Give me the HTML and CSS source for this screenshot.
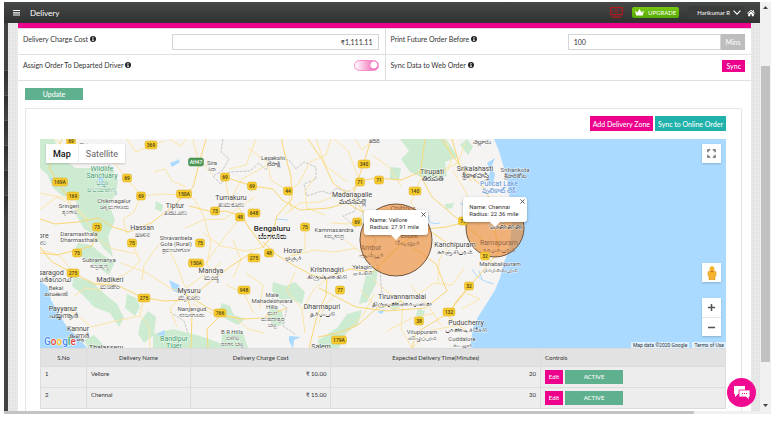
FILE: index.html
```html
<!DOCTYPE html>
<html lang="en">
<head>
<meta charset="utf-8">
<title>Delivery</title>
<link rel="stylesheet" href="styles.css">
</head>
<body>
<svg class="defs" aria-hidden="true">
  <symbol id="info" viewBox="0 0 12 12"><circle cx="6" cy="6" r="6" fill="#222"/><path d="M5 2h2v2H5zM4 5h3v4h1v1H4V9h1V6H4z" fill="#fff"/></symbol>
</svg>
<div class="window">
  <div class="app">
    <header class="topbar">
      <button class="menu" aria-label="Menu"><svg viewBox="0 0 7 6"><path d="M0 .5h7M0 2.8h7M0 5h7" stroke="#fff" stroke-width="1.2"/></svg></button>
      <h1>Delivery</h1>
      <svg class="cash" viewBox="0 0 13 11"><path d="M.7.7h11.6v7H.7zM2 10.2h9" fill="none" stroke="#b8191c" stroke-width="1.2"/><circle cx="6.500" cy="4.200" r="1.500" fill="none" stroke="#b8191c" stroke-width=".8"/><path d="M2.500 4.200h1M9.500 4.200h1" stroke="#b8191c"/></svg>
      <a class="upgrade" href="#"><svg viewBox="0 0 9 7"><path d="M0 1.500L2.300 3.500 4.500 0 6.700 3.500 9 1.500 7.800 6.500H1.200z" fill="#fff"/></svg>UPGRADE</a>
      <button class="user">Harikumar R <svg viewBox="0 0 8 5"><path d="M.6.6L4 4.200 7.400.6" fill="none" stroke="#fff" stroke-width="1.100"/></svg></button>
      <a class="home" href="#" aria-label="Home"><svg viewBox="0 0 9 8"><path d="M4.500.3L0 4.300l.6.6L4.500 1.600l3.900 3.300.6-.6L7.700 3V.8H6.500V2zM1.300 5v2.700h2.300V5.400h1.800v2.300h2.300V5L4.500 2.300z" fill="#fff"/></svg></a>
    </header>
    <div class="body">
      <nav class="rail" aria-label="Sections"><span></span><span></span><span></span><span></span><span></span><span></span></nav>
      <main>
        <form class="settings">
          <div class="field">
            <label for="cost">Delivery Charge Cost <svg class="info"><use href="#info"/></svg></label>
            <input id="cost" class="money" type="text" value="₹1,111.11">
          </div>
          <div class="field">
            <label for="before">Print Future Order Before <svg class="info"><use href="#info"/></svg></label>
            <div class="group"><input id="before" type="text" value="100"><span>Mins</span></div>
          </div>
          <div class="field">
            <label for="assign">Assign Order To Departed Driver <svg class="info"><use href="#info"/></svg></label>
            <input id="assign" class="switch" type="checkbox" checked>
          </div>
          <div class="field">
            <label for="sync">Sync Data to Web Order <svg class="info"><use href="#info"/></svg></label>
            <button id="sync" type="button" class="btn pink">Sync</button>
          </div>
        </form>
        <button class="btn green update">Update</button>
        <section class="panel">
          <div class="actions">
            <button class="btn pink">Add Delivery Zone</button>
            <button class="btn teal">Sync to Online Order</button>
          </div>
          <div class="map">
            <svg class="canvas" viewBox="40 139 686 209" preserveAspectRatio="xMidYMid slice" role="img" aria-label="Delivery zones">
              <path class="land" d="M40 139H726V348H40z"/>
              <g class="forest">
                <path d="M40 139h14l7 17 14 12 15 0 22 0 6 13-2 12-7 12 6 15-7 17 5 20-10-9-8-13-11-6-9-16 2-16-14-1-10-8-6-14-7-6z"/>
                <path d="M78 243l13 2 12 10 12 7-6 13-13-9-11-8-12-4z"/>
                <path d="M74 276l18 6 15 14 10 8 7 14-5 9-9-14-16-6-11-12-11-9z"/>
                <path d="M127 294l9 4 4 9-5 9-10-8z"/>
                <path d="M141 321l7-10 8 6-2 18-10 8-6-9z"/>
                <path d="M84 340l10-5 12 13H88zM153 334l20-5 27 7 20 7 8 5h-75z"/>
                <path d="M273 282l13 4 9-4 10 10-3 12-12-5-9 1-9-9zM270 304l12 8 3 11-9 4-8-8z"/>
                <path d="M222 303l8 3 4 9 11 4-7 6-12-6-8-6zM222 334l20-4 6 18h-27z"/>
                <path d="M318 340l19-12 10-14 15-4-4 15-11 7-8 16h-20z"/>
                <path d="M362 292l4-17 12-8-2 17-9 18-8 2z"/>
                <path d="M400 139h46l12 18-13 5 2 14-18 4-19-8-9-13 8-8z"/>
                <path d="M390 167l11 1-2 12-9-1zM467 139l6 8-5 8-8-10zM156 201l7 4-1 7-7-3z"/>
                <path d="M418 308l7 3-2 7-7-2zM393 302l8 4-6 5-5-3zM445 204l9-1-2 5-6 1z"/>
              </g>
              <g class="water">
                <path d="M40 281l8 6 3 13 8 14 8 13 11 10 9 11H40z"/>
                <path d="M494 139l5 12 5 17 3 9 1 9 2 16 2 22-3 27-5 11-4 16-5 12-8 13-9 14-5 11-3 20H726V139z"/>
                <path d="M495 158l-4 10 4 6-2 12-5-4 2-12-3-7zM170 163l8-3-1-3 3 5-8 5zM169 280l10 5 1 8-7-2zM157 334l8-4-1 7zM289 336l12 1-7 3-1 9-4-8zM377 312l8-3-3 5zM98 178l4-2 3 12-5-3zM50 178l8 1-5 4z"/>
                <path class="creek" d="M472 269q6 12 22 15M479 271l3 8M460 203q13 11 27 3M440 223q-12 3-12-8M276 219l12 1"/>
              </g>
              <path class="border" d="M223 139l-2 13 8 7-7 12-9 5 8 8 8-12 21-1 9-8 7 7 5-12 18 2 7 9 8-7 12 5 0 12-12 5 3 12 15-5 8 3 6-6 21 6-2 17-12 5 12 11 12-5 9 19-5 12 9 18 2 24M170 312l14 9 4 12M272 298l15 10-4 18 12 8"/>
              <g class="minor">
                <path d="M40 209l17-12 12 6 16 15 11 20 17 11 25 5M54 139l19 14 17 6 23 2 14 18 14 16-7 17-11 7 4 15M127 139l9 13 15-7 14-4M141 196l20-2 22 1 11 4 9 15 8 28-4 22 9 16M154 172l11-3 7 12 14 6M193 139l4 17 16 19M185 228l18-8 22-1 17-14 13-8M202 268l13-18 13-17 12-15M186 288l18-13 17-12M182 295l-12 14 7 18M193 304l20 10 22 3 13 12 16 4M144 298l-4 17 9 12 1 21M59 307l17 7 15 13 24-6 25-5M74 296l11-8 15 2 12-9M132 243l8 18-11 11-19 10-15 2M40 250l19 5 14 17M159 244l-15 21-2 15M168 248l10 20 7 19M248 148l20 15 3 17 17 11 4 20M229 169l17-4 10-26M331 139l-5 16-16 7-11 21-9 8M285 214l15-11 20-1 19-8 12-4M316 139l9 26 22 17M334 139l14 12 12 31M305 227l0 22-19 9M292 256l22-6 20 2 23-4M327 279l-13 10-12 21 3 23M340 290l-16 16-5 17M361 290l13 15 26 4M374 294l-10 20-22 24M403 302l-2 27 11 19M403 302l-18-12-12-11M416 296l18-13 18 2 12-17M452 240l-13 20-1 22M466 293l14 6-18 10M418 170l20 2 20-9 7-20M420 180l-9 23 12 16M453 171l12 20 9 18M445 139l7 18-4 13-15 7M410 285l19 22 12 18M387 331l25-13 23-5M412 348l20-18 28-5M40 193l25 5 23 21M68 154l23 6 15-14M169 139l12 7 5-7M121 263l24 9 27 17 12 2M225 177l3 18 13 16 8 18M203 233l18 13 25 5 19-4M230 200l12-21 27-15M226 285l18 8 10 21M246 273l17 12-3 24M295 272l-8 19 15 18M233 240l8 20-8 18M355 139l7 11 12-11M372 155l17 12 12 19M315 177l-10 14 2 17 18 7M331 223l18 1 14-9M345 240l15 12 15-12"/>
              </g>
              <g class="major">
                <path d="M40 219l15 5 23-2 20-4 15 9 16 5 22-9 19-14 23-22 6-23 7-25M62 139l-13 29 18 28M189 206l24 6 13-1 15 5 14 20 8 11 9-11 5-20 15-17-1-22-8-30-2-12M225 177l27 9 21 3 9 11 18 10 29-2 18-5 26 15 28 4 27 8 18 12M40 253l17 2 16-4 19-5 8-18M40 247l12 15 21 11 22 11 22 1 24 12 23 4 26-1 15-14 26-20 22-14M185 291l7 22-1 35M187 295l18 11 18 10 20 3 20-1 24-10M308 139l15 22 10 22 20 15 20 26M352 190l8-9 16-3 25 2 19-8M363 165l8-25M363 165l-9 27M263 242l14 13 18 11 17 9 15 3-1 17-9 21-8 32M327 278l22-9 24 3 29-29 24-14 20-2 28-7 19-15M414 248l22 16 11 27-22 17-38 3-31-4-37-19M425 139l-5 36 12 22 28 24 22 18M452 139l8 28 23 20 12 21M494 219l4 34-29 34-21 26-32 20-4 15M469 286l-13 16-8 14 19 16M441 139l30 42M318 337l20-4 20-8 19-17 25-7M220 316l-13 13 1 19"/>
              </g>
              <circle class="zone" cx="396" cy="240" r="36"/>
              <circle class="zone" cx="495" cy="228" r="29"/>
              <g id="labels"></g>
              <g id="shields"></g>
              <text class="google" x="44" y="345"><tspan fill="#4285f4">G</tspan><tspan fill="#ea4335">o</tspan><tspan fill="#fbbc05">o</tspan><tspan fill="#4285f4">g</tspan><tspan fill="#34a853">l</tspan><tspan fill="#ea4335">e</tspan></text>
            </svg>
            <div class="maptype"><button class="on">Map</button><button>Satellite</button></div>
            <button class="ctl full" aria-label="Full screen"><svg viewBox="0 0 10 10"><path d="M1 3.500V1h2.500M6.500 1H9v2.500M9 6.500V9H6.500M3.500 9H1V6.500" fill="none" stroke="#555" stroke-width="1.300"/></svg></button>
            <button class="ctl person" aria-label="Street view"><svg viewBox="0 0 10 14"><circle cx="5" cy="2.700" r="2.500" fill="#f5b32c"/><path d="M2 5h6l1 1v4H8v4H5.300v-2h-.6v2H2v-4H1V6z" fill="#f5b32c" stroke="#d99420" stroke-width=".5"/><path d="M3.500 5h3L5 6.500z" fill="#d45d2b"/></svg></button>
            <div class="zoom"><button aria-label="Zoom in"><svg viewBox="0 0 10 10"><path d="M1 5h8M5 1v8" stroke="#555" stroke-width="1.700"/></svg></button><button aria-label="Zoom out"><svg viewBox="0 0 10 10"><path d="M1 5h8" stroke="#555" stroke-width="1.700"/></svg></button></div>
            <div class="bubble vellore">Name: Vellore<br>Radius: 27.91 mile<button aria-label="Close"><svg viewBox="0 0 5 5"><path d="M.5.5l4 4M4.500.5l-4 4" stroke="#333" stroke-width=".8"/></svg></button></div>
            <div class="bubble chennai">Name: Chennai<br>Radius: 22.36 mile<button aria-label="Close"><svg viewBox="0 0 5 5"><path d="M.5.5l4 4M4.500.5l-4 4" stroke="#333" stroke-width=".8"/></svg></button></div>
            <div class="credit"><span>Map data ©2020 Google</span><a href="#">Terms of Use</a></div>
          </div>
          <table>
            <colgroup><col class="c1"><col class="c2"><col class="c3"><col class="c4"><col class="c5"></colgroup>
            <thead><tr><th>S.No</th><th>Delivery Name</th><th>Delivery Charge Cost</th><th>Expected Delivery Time(Minutes)</th><th class="left">Controls</th></tr></thead>
            <tbody>
              <tr><td>1</td><td>Vellore</td><td class="num">₹ 10.00</td><td class="num">20</td><td><div class="controls"><button class="btn pink">Edit</button><button class="btn green">ACTIVE</button></div></td></tr>
              <tr><td>2</td><td>Chennai</td><td class="num">₹ 15.00</td><td class="num">30</td><td><div class="controls"><button class="btn pink">Edit</button><button class="btn green">ACTIVE</button></div></td></tr>
            </tbody>
          </table>
        </section>
      </main>
    </div>
  </div>
  <div class="vbar"><svg viewBox="0 0 5 3"><path d="M0 3L2.500 0 5 3z" fill="#444"/></svg><i></i><svg viewBox="0 0 5 3"><path d="M0 0h5L2.500 3z" fill="#444"/></svg></div>
  <div class="hbar"><i></i></div>
  <button class="chat" aria-label="Chat"><svg viewBox="0 0 16 14"><path d="M0 0h11v8H4l-3 3V8H0z" fill="#fff"/><path d="M5 4h11v7h-1v3l-3-3H5z" fill="#fff" stroke="#f00b91" stroke-width=".8"/><path d="M8 7.500h1M10 7.500h1M12 7.500h1" stroke="#f00b91"/></svg></button>
</div>
<script src="map.js"></script>
</body>
</html>
```
FILE: styles.css
```css
* { box-sizing: border-box; }
body { margin: 2px 5px 9px 4px; background: #fff; color: #333; font: 7px/10px Lato, "Noto Sans", sans-serif; }
button, input { font: inherit; color: inherit; margin: 0; padding: 0; border: 0; background: none; border-radius: 0; }
a { color: inherit; text-decoration: none; }
svg { display: block; }
.defs { position: absolute; width: 0; height: 0; }
.window { position: relative; display: grid; grid-template-columns: 1fr 11px; }

.topbar { display: flex; align-items: center; height: 21px; padding: 0 5px 0 9px; background: linear-gradient(#464848, #303232); color: #fff; }
.menu svg { width: 7px; height: 6px; }
.topbar h1 { flex: 1; margin: 0 0 0 10px; font-size: 8px; font-weight: 400; }
.cash { width: 13px; height: 11px; margin-right: 9px; }
.upgrade { display: flex; align-items: center; gap: 4px; height: 11px; padding: 0 3px; border-radius: 2px; background: linear-gradient(#78c811, #55a906); margin-right: 10px; font-size: 6px; }
.upgrade svg { width: 9px; height: 7px; }
.user { display: flex; align-items: center; gap: 3px; height: 13px; padding: 0 3px 0 8px; background: #3a3c3c; border-radius: 2px; margin-right: 3px; font-size: 6px; }
.user svg { width: 8px; height: 5px; }
.home svg { width: 8px; height: 8px; }

.body { display: grid; grid-template-columns: 4px 1fr; padding-right: 9px; background: repeating-linear-gradient(#0000 0 1px, #00000006 1px 2px), repeating-linear-gradient(90deg, #ebebeb 0 2px, #e5e5e5 2px 3px); }
.rail { display: flex; flex-direction: column; background: #414342; padding-top: 47px; }
.rail span { height: 25px; background: linear-gradient(#303030, #434343); border-top: 1px solid #555; }
main { min-width: 0; margin-left: 10px; background: #fff; border-top: 5px solid #ec008c; }

.settings { display: grid; grid-template-columns: 1fr 1fr; border-top: 1px solid #ddd; }
.field { display: flex; align-items: flex-start; justify-content: space-between; height: 26px; padding: 5px 6px 0 5px; border-bottom: 1px solid #e0e0e0; }
.field:nth-child(even) { border-left: 1px solid #ddd; }
.field label { display: flex; align-items: center; gap: 2px; }
.info { width: 6px; height: 6px; }
.field input[type=text] { height: 16px; padding: 0 5px; border: 1px solid #d5d5d5; background: #fff; min-width: 0; }
.field .money { width: 58%; text-align: right; }
.group { display: flex; width: 50%; }
.group input { flex: 1; }
.group span { width: 24px; background: #bdbdbd; color: #fff; text-align: center; line-height: 16px; }
.switch { appearance: none; width: 25px; height: 11px; border: 1px solid #f58fcd; border-radius: 6px; background: radial-gradient(circle at 19px 4px, #fff 3px, #0000 4px), linear-gradient(90deg, #fff, #ee4fa9); }
.field .btn { height: 12px; padding: 0 4px; }

.btn { color: #fff; font-weight: 500; white-space: nowrap; }
.pink { background: #ec008c; }
.green { background: #5eb08e; }
.teal { background: #20b2aa; }
.update { display: block; width: 58px; height: 12px; margin: 7px 0 8px 7px; }

.panel { margin: 0 9px 0 7px; padding: 7px 15px 2px 14px; border: 1px solid #e5e5e5; border-bottom: 0; border-radius: 2px 2px 0 0; }
.actions { display: flex; justify-content: flex-end; gap: 2px; margin-bottom: 8px; }
.actions .btn { height: 15px; padding: 0 3px; }

.map { position: relative; font-family: Roboto, sans-serif; overflow: hidden; }
.canvas { width: 100%; height: 209px; }
.land { fill: #f5f4f2; }
.forest { fill: #cdebd1; }
.water { fill: #aadaff; }
.creek { fill: none; stroke: #aadaff; }
.border { fill: none; stroke: #c9c9c9; stroke-width: 1; stroke-dasharray: 3 1; }
.minor, .major { fill: none; stroke-linejoin: round; }
.minor { stroke: #fbe6a8; stroke-width: 1; }
.major { stroke: #fad777; stroke-width: 1; }
.zone { fill: #eb8325; fill-opacity: .6; stroke: #70543d; stroke-width: 1; }
.town { fill: #555; font-size: 6px; text-anchor: middle; stroke: #fff; stroke-width: 1; paint-order: stroke; stroke-opacity: .7; }
.town.mid { fill: #444; font-size: 7px; }
.town.city { fill: #222; font-size: 8px; font-weight: 500; }
.town.park { fill: #3d9a6b; font-size: 7px; }
.town.sea { fill: #5590d8; font-size: 7px; }
.town.zoned { fill: #94664a; stroke: none; font-size: 7px; }
.shield rect { fill: #f5cb2f; stroke: #dcae22; stroke-width: .5; }
.shield text { fill: #4b400f; font-size: 5px; font-weight: 500; text-anchor: middle; }
.shield.hw rect { fill: #4d9a57; stroke: #3b8246; }
.shield.hw text { fill: #fff; }
.google { font: 500 10px Roboto, sans-serif; stroke: #fff; stroke-width: 1; paint-order: stroke; }

.maptype, .ctl, .zoom { position: absolute; background: #fff; box-shadow: 0 1px 2px #0003; }
.maptype { left: 6px; top: 5px; display: flex; height: 19px; font-size: 9px; color: #666; }
.maptype button { padding: 0 7px; }
.maptype .on { color: #111; font-weight: 500; border-right: 1px solid #eee; }
.ctl { right: 5px; width: 19px; height: 19px; display: grid; place-items: center; }
.full { top: 5px; }
.full svg, .zoom svg { width: 9px; height: 9px; }
.person { bottom: 66px; }
.person svg { width: 10px; height: 14px; }
.zoom { right: 5px; bottom: 12px; width: 19px; }
.zoom button { width: 19px; height: 19px; display: grid; place-items: center; }
.zoom button + button { border-top: 1px solid #e6e6e6; }
.bubble { position: absolute; width: 64px; height: 25px; padding: 6px 0 0 6px; border-radius: 3px; background: #fff; box-shadow: 0 1px 3px #0005; font-size: 6px; line-height: 7px; white-space: nowrap; }
.bubble::after { content: ""; position: absolute; left: 50%; top: 100%; margin-left: -5px; border: 5px solid transparent; border-top-color: #fff; border-bottom: 0; }
.bubble button { position: absolute; right: 2px; top: 2px; }
.bubble button svg { width: 5px; height: 5px; }
.vellore { left: 47.2%; top: 71px; }
.chennai { left: 61.7%; top: 58px; }
.credit { position: absolute; right: 0; bottom: 0; display: flex; gap: 3px; font-size: 5px; line-height: 6px; color: #333; }
.credit > * { background: #ffffffa0; padding: 0 2px; }

table { width: 100%; border-collapse: collapse; table-layout: fixed; background: #ededed; font-size: 6px; line-height: 8px; }
.c1 { width: 6.7%; } .c2 { width: 15.2%; } .c3 { width: 20.5%; } .c4 { width: 30.6%; } .c5 { width: 27%; }
th, td { border: 1px solid #dcdcdc; padding: 0 4px; font-weight: 400; text-align: left; vertical-align: top; }
th { height: 18px; background: #e2e2e2; text-align: center; vertical-align: middle; }
th.left { text-align: left; }
td { height: 21px; padding-top: 3px; }
td.num { text-align: right; }
.controls { display: flex; gap: 2px; }
.controls .btn { height: 14px; }
.controls .pink { width: 18px; }
.controls .green { width: 58px; }

.vbar { display: flex; flex-direction: column; align-items: center; background: #f1f1f1; padding: 4px 0; }
.vbar svg { width: 5px; height: 3px; }
.vbar i { flex: 294; width: 9px; margin: 57px 0 42px; background: #c1c1c1; }
.hbar { grid-column: 1 / -1; height: 3px; background: #f0f0f0; }
.hbar i { display: block; width: 90%; height: 3px; background: #c4c4c4; }
.chat { position: absolute; right: 15px; bottom: 7px; width: 29px; height: 29px; border-radius: 50%; background: #f00b91; display: grid; place-items: center; }
.chat svg { width: 16px; height: 14px; }
```
FILE: map.js
```js
const NS = 'http://www.w3.org/2000/svg';

// x, y of the first baseline, style, lines
const places = [
  [96, 147, '', 'Shivamogga'], [102, 171, 'park', 'Wildlife', 'Sanctuary', 'ಭದ್ರಾ', 'ಅಭಯಾರಣ್ಯ'],
  [114, 203, '', 'Chikmagalur', 'ಚಿಕ್ಕಮಗಳೂರು'], [69, 208, '', 'Sringeri', 'ಶೃಂಗೇರಿ'],
  [79, 236, '', 'Daramasthala', 'Dharmasthala'], [142, 230, 'mid', 'Hassan', 'ಹಾಸನ'],
  [175, 208, 'mid', 'Tiptur', 'ತಿಪಟೂರು'], [212, 165, '', 'Sira', 'ಸಿರಾ'],
  [176, 240, '', 'Shravanbela', 'Gola (Rural)', 'ಶ್ರವಣಬೆಳಗೊಳ'], [231, 200, 'mid', 'Tumakuru', 'ತುಮಕೂರು'],
  [273, 160, '', 'Lepakshi', 'లేపాక్షి'], [352, 197, 'mid', 'Madanapalle', 'మదనపల్లె'],
  [272, 231, 'city', 'Bengaluru', 'ಬೆಂಗಳೂರು'], [334, 232, '', 'Kammasandra', 'ಕಮ್ಮಸಂದ್ರ'],
  [293, 253, 'mid', 'Hosur', 'ஓசூர்'], [327, 272, 'mid', 'Krishnagiri', 'கிருஷ்ணகிரி'],
  [322, 309, 'mid', 'Dharmapuri', 'தர்மபுரி'], [272, 297, '', 'Male', 'Mahadeshwara', 'Hills', 'ಮಲೆ', 'ಮಹದೇಶ್ವರ', 'ಬೆಟ್ಟ'],
  [232, 334, '', 'B R Hills', 'ಬಿಳಿಗಿರಿ', 'ರಂಗನ ಬೆಟ್ಟ'], [321, 349, 'mid', 'Salem'],
  [362, 269, '', 'Yelagiri', 'ஏலகிரி'], [371, 250, 'zoned', 'Ambur', 'ஆம்பூர்'],
  [403, 211, 'zoned', 'Chittoor'], [407, 238, 'zoned', 'Vellore', 'வேலூர்'],
  [432, 174, 'mid', 'Tirupati', 'తిరుపతి'], [475, 171, 'mid', 'Srikalahasti', 'శ్రీకాళహస్తి'],
  [515, 172, '', 'Sriharikota', 'శ్రీహరికోట'], [499, 186, 'sea', 'Pulicat Lake', 'పులికాట్ లేక్'],
  [482, 144, '', 'నెల్లూరు'], [374, 143, '', 'కదిరి'], [506, 229, 'city', 'சென்னை'],
  [499, 245, 'zoned', 'Ramapuram', 'ராமாபுரம்'], [455, 247, 'mid', 'Kanchipuram', 'காஞ்சிபுரம்'],
  [500, 266, '', 'Mahabalipuram', 'மாமல்லபுரம்'], [402, 299, 'mid', 'Tiruvannamalai', 'திருவண்ணாமலை'],
  [422, 334, '', 'Viluppuram', 'விழுப்புரம்'], [466, 325, 'mid', 'Puducherry', 'பாண்டிச்சேரி'],
  [462, 341, '', 'Cuddalore', 'கடலூர்'], [99, 262, '', 'Subramanya', 'ಸುಬ್ರಹ್ಮಣ್ಯ'],
  [47, 275, 'mid', 'Kasaragod', 'കാസർഗോഡ്'], [110, 282, 'mid', 'Madikeri', 'ಮಡಿಕೇರಿ'],
  [211, 273, 'mid', 'Mandya', 'ಮಂಡ್ಯ'], [189, 293, 'mid', 'Mysuru', 'ಮೈಸೂರು'],
  [192, 311, '', 'Nanjangud', 'ನಂಜನಗೂಡು'], [56, 290, '', 'Bekal', 'ബേക്കൽ'],
  [63, 311, 'mid', 'Payyanur', 'പയ്യന്നൂർ'], [78, 331, 'mid', 'Kannur', 'കണ്ണൂർ'],
  [106, 350, 'mid', 'Thalassery'], [32, 238, 'mid', 'Mangalore', 'ಮಂಗಳೂರು'],
  [174, 341, 'park', 'Bandipur', 'Tiger']
];

const shields = [
  [71, 141, 69], [151, 145, 369], [196, 162, 'AH47'], [127, 178, 69], [60, 182, '169A'], [73, 196, 169],
  [141, 196, 69], [184, 194, '150A'], [225, 177, 69], [97, 227, 73], [215, 211, 73], [132, 243, 75],
  [200, 243, 75], [77, 253, 75], [73, 273, 275], [196, 263, '150A'], [144, 298, 275], [220, 313, 766],
  [252, 186, 69], [288, 191, 44], [364, 164, 340], [360, 182, 71], [379, 180, 71], [415, 191, 140],
  [254, 213, 648], [240, 217, 48], [305, 227, 75], [357, 222, 69], [269, 253, 48], [254, 258, 275],
  [244, 290, 948], [340, 290, 77], [339, 340, '179A'], [419, 321, 38], [449, 312, 132], [469, 286, 32],
  [485, 256, 32], [463, 221, 71]
];

function add(parent, tag, attrs, text) {
  const el = document.createElementNS(NS, tag);
  for (const key in attrs) el.setAttribute(key, attrs[key]);
  if (text !== undefined) el.textContent = text;
  parent.append(el);
  return el;
}

const labelLayer = document.getElementById('labels');
for (const [x, y, kind, ...lines] of places) {
  const step = kind === 'city' ? 8 : kind === '' ? 6 : 7;
  lines.forEach((line, i) => add(labelLayer, 'text', { x, y: y + i * step, class: 'town ' + kind }, line));
}

const shieldLayer = document.getElementById('shields');
for (const [x, y, name] of shields) {
  const w = String(name).length * 3 + 3;
  const g = add(shieldLayer, 'g', { class: name === 'AH47' ? 'shield hw' : 'shield' });
  add(g, 'rect', { x: x - w / 2, y: y - 4, width: w, height: 8, rx: 2 });
  add(g, 'text', { x, y: y + 2 }, name);
}
```
